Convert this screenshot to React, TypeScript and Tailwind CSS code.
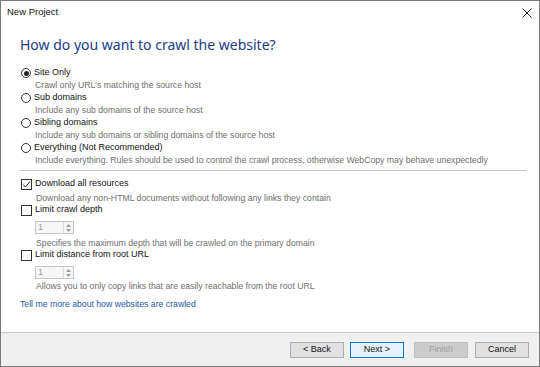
import React from "react";

const radios = [
  { label: "Site Only", desc: "Crawl only URL's matching the source host", on: true },
  { label: "Sub domains", desc: "Include any sub domains of the source host", on: false },
  { label: "Sibling domains", desc: "Include any sub domains or sibling domains of the source host", on: false },
  {
    label: "Everything (Not Recommended)",
    desc: "Include everything. Rules should be used to control the crawl process, otherwise WebCopy may behave unexpectedly",
    on: false,
  },
];

function Radio({ on }: { on: boolean }) {
  return (
    <span className="ml-[1px] w-[10px] h-[10px] rounded-full border border-[#333] bg-white flex items-center justify-center shrink-0">
      {on && <span className="w-[5px] h-[5px] rounded-full bg-[#222]" />}
    </span>
  );
}

function Check({ on }: { on: boolean }) {
  return (
    <span className="ml-[1px] w-[11px] h-[11px] border border-[#333] bg-white flex items-center justify-center shrink-0">
      {on && (
        <svg width="9" height="9" viewBox="0 0 9 9">
          <path d="M1 4.5 L3.5 7 L8 1.5" fill="none" stroke="#222" strokeWidth="1" />
        </svg>
      )}
    </span>
  );
}

function Spin() {
  return (
    <div className="ml-[15px] w-[39px] h-[13px] border border-[#c6c6c6] bg-[#f6f6f6] flex">
      <span className="flex-1 pl-[2px] text-[#9a9a9a] leading-[11px]">1</span>
      <span className="w-[10px] flex flex-col items-center justify-center gap-[2px] border-l border-[#dcdcdc]">
        <svg width="5" height="3" viewBox="0 0 5 3">
          <path d="M0 3 L2.5 0 L5 3 Z" fill="#9a9a9a" />
        </svg>
        <svg width="5" height="3" viewBox="0 0 5 3">
          <path d="M0 0 L2.5 3 L5 0 Z" fill="#9a9a9a" />
        </svg>
      </span>
    </div>
  );
}

function Btn({ children, primary, disabled }: { children: React.ReactNode; primary?: boolean; disabled?: boolean }) {
  const cls = primary
    ? "border-[#0078d7] bg-[#e5f1fb] text-[#111]"
    : disabled
    ? "border-[#bfbfbf] bg-[#cccccc] text-[#a0a0a0]"
    : "border-[#adadad] bg-[#e1e1e1] text-[#111]";
  return (
    <div className={"w-[54px] h-[16px] border flex items-center justify-center text-[9px] " + cls}>
      {children}
    </div>
  );
}

export default function App() {
  return (
    <div className="w-[540px] h-[367px] border border-[#7a7a7a] bg-white flex flex-col overflow-hidden font-['Liberation_Sans',sans-serif] text-[9px]">
      <div className="h-[23px] shrink-0 flex items-center justify-between pl-[6px] pr-[7px]">
        <span className="text-[9.5px] text-[#111]">New Project</span>
        <svg width="10" height="10" viewBox="0 0 10 10">
          <path d="M0.5 0.5 L9.5 9.5 M9.5 0.5 L0.5 9.5" stroke="#222" strokeWidth="1" />
        </svg>
      </div>

      <div className="flex-1 flex flex-col pl-[19px] pr-[12px]">
        <h1 className="mt-[12px] h-[18px] leading-[18px] text-[14px] text-[#213c87] font-['Noto_Sans',sans-serif]">
          How do you want to crawl the website?
        </h1>

        <div className="mt-[13px] flex flex-col">
          {radios.map((r) => (
            <div key={r.label} className="flex flex-col">
              <div className="h-[12px] flex items-center gap-[3px] text-[#111]">
                <Radio on={r.on} />
                <span>{r.label}</span>
              </div>
              <div className="h-[13px] leading-[13px] pl-[15px] text-[8.7px] text-[#6e6e6e]">{r.desc}</div>
            </div>
          ))}
        </div>

        <div className="mt-[3px] h-px bg-[#c8c8c8]" />

        <div className="mt-[7px] h-[12px] flex items-center gap-[3px] text-[#111]">
          <Check on />
          <span>Download all resources</span>
        </div>
        <div className="mt-[2px] h-[12px] leading-[12px] pl-[16px] text-[8.7px] text-[#6e6e6e]">
          Download any non-HTML documents without following any links they contain
        </div>

        <div className="mt-0 h-[12px] flex items-center gap-[3px] text-[#111]">
          <Check on={false} />
          <span>Limit crawl depth</span>
        </div>
        <div className="mt-[5px]">
          <Spin />
        </div>
        <div className="mt-[3px] h-[12px] leading-[12px] pl-[16px] text-[8.7px] text-[#6e6e6e]">
          Specifies the maximum depth that will be crawled on the primary domain
        </div>

        <div className="mt-0 h-[12px] flex items-center gap-[3px] text-[#111]">
          <Check on={false} />
          <span>Limit distance from root URL</span>
        </div>
        <div className="mt-[5px]">
          <Spin />
        </div>
        <div className="mt-[1px] h-[12px] leading-[12px] pl-[16px] text-[8.7px] text-[#6e6e6e]">
          Allows you to only copy links that are easily reachable from the root URL
        </div>

        <div className="mt-[6px] h-[12px] leading-[12px] text-[8.7px] text-[#1c5a9c]">
          Tell me more about how websites are crawled
        </div>
      </div>

      <div className="h-[34px] shrink-0 border-t border-[#c8c8c8] bg-[#f0f0f0] flex items-center justify-end pr-[10px]">
        <Btn>&lt; Back</Btn>
        <div className="w-[6px]" />
        <Btn primary>Next &gt;</Btn>
        <div className="w-[10px]" />
        <Btn disabled>Finish</Btn>
        <div className="w-[7px]" />
        <Btn>Cancel</Btn>
      </div>
    </div>
  );
}
